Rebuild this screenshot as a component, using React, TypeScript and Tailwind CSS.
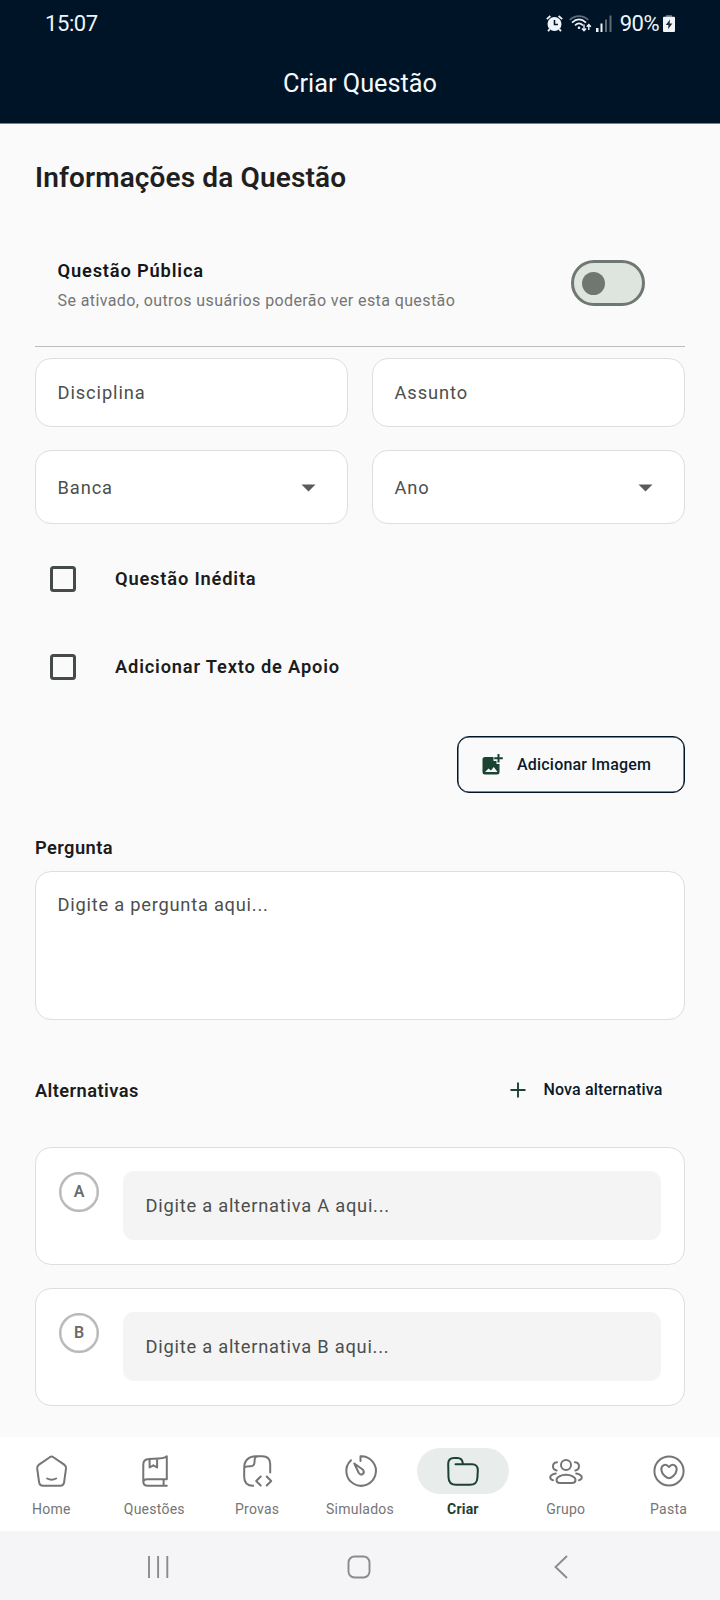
import type { ReactNode } from "react";

function StatusBar() {
  return (
    <div className="flex h-[46px] items-center justify-between pl-[45px] pr-[45px] pt-px text-[22px] leading-[26px] text-[#eef4fa]">
      <span className="tracking-[-0.4px]">15:07</span>
      <div className="flex items-center">
        <svg width="17" height="17" viewBox="0 0 16 16.5" fill="#eef4fa">
          <circle cx="8" cy="8.700" r="6.800" />
          <path d="M0.500 4 4 1M15.500 4 12 1M3.300 13.500l-1.500 2.300M12.700 13.500l1.500 2.300" stroke="#eef4fa" strokeWidth="1.800" />
          <path d="M8 4.800v4.500h3.300" fill="none" stroke="#001427" strokeWidth="1.500" />
        </svg>
        <svg className="ml-[6px]" width="23" height="17" viewBox="0 0 23 17" fill="none" strokeWidth="1.700">
          <path d="M0.700 5C6-.200 14-.200 19.300 5" stroke="#5d6b79" />
          <path d="M3 7.600C7.500 3.500 12.500 3.500 17 7.600M6 10.300C8.500 8 11.500 8 14 10.300" stroke="#eef4fa" />
          <circle cx="10" cy="12.800" r="1.300" fill="#eef4fa" />
          <path d="M15 9.500v6M12.900 13.500l2.100 2.200 2.100-2.200M19.800 15v-5.500M17.700 11.700l2.100-2.200 2.100 2.200" stroke="#eef4fa" strokeWidth="1.400" />
        </svg>
        <svg className="ml-[4px]" width="17" height="17" viewBox="0 0 17 17">
          <rect x="0" y="13" width="2.500" height="4" fill="#eef4fa" />
          <rect x="4.500" y="8.500" width="2" height="8.500" fill="#eef4fa" />
          <rect x="9" y="4.500" width="2" height="12.500" fill="#5d6b79" />
          <rect x="13.500" y="0.500" width="2" height="16.500" fill="#5d6b79" />
        </svg>
        <span className="ml-[7px] tracking-[-0.5px]">90%</span>
        <svg className="ml-[4px]" width="12" height="17" viewBox="0 0 12 17">
          <rect x="3" y="0" width="6" height="3" fill="#5d6b79" />
          <rect x="0" y="1.700" width="12" height="15.300" rx="1" fill="#eef4fa" />
          <path d="M7 4.500 2.800 10h2.700L5 14.200 9.400 8.500H6.600z" fill="#20262c" />
        </svg>
      </div>
    </div>
  );
}

function Field({ label, select = false }: { label: string; select?: boolean }) {
  return (
    <div
      className={
        "flex flex-1 items-center justify-between rounded-[16px] border border-[#dedede] bg-white pl-[21.5px] pr-[31.5px] text-[18.3px] tracking-[0.9px] text-[#4b4f4d] " +
        (select ? "h-[74px] pt-px" : "h-[69px]")
      }
    >
      <span>{label}</span>
      {select && (
        <svg width="15" height="8" viewBox="0 0 15 8" fill="#5b5b5b">
          <path d="M0.500 0.500h14L7.500 7.500z" />
        </svg>
      )}
    </div>
  );
}

function CheckRow({ label }: { label: string }) {
  return (
    <label className="flex h-[88px] items-center pl-[15px]">
      <span className="size-[26px] rounded-[3.5px] border-[3px] border-[#454b48]" />
      <span className="ml-[39px] text-[18.3px] font-semibold tracking-[0.82px] text-[#1c1c1c]">{label}</span>
    </label>
  );
}

function Alternative({ letter }: { letter: string }) {
  return (
    <div className="flex h-[118px] items-start rounded-[16px] border border-[#dedede] bg-white px-[23px] pt-[23px]">
      <div className="mt-px flex size-[40px] items-center justify-center rounded-full border-2 border-[#b8b8b8] text-[16px] font-semibold text-[#6b6b6b] shadow-[inset_0_0_0_0.5px_#b8b8b8]">
        {letter}
      </div>
      <div className="ml-[24px] flex h-[69px] flex-1 items-center rounded-[11px] bg-[#f4f4f4] pl-[22.5px] text-[18.3px] tracking-[0.76px] text-[#4b4f4d]">
        Digite a alternativa {letter} aqui...
      </div>
    </div>
  );
}

const icons: Record<string, ReactNode> = {
  Home: (
    <g transform="translate(0.600 0)">
      <path d="M14.200 2.200 3.400 9.600Q1.300 11.100 1.600 13.700L3.500 27.400Q4 30.800 7.500 30.800H24.500Q28 30.800 28.500 27.400L30.400 13.700Q30.700 11.100 28.600 9.600L17.800 2.200Q16 1 14.200 2.200Z" />
      <path d="M11.500 23.500Q16 26 20.500 23.500" />
    </g>
  ),
  Questões: (
    <g transform="translate(3.300 0)">
      <path d="M25.500 24.300V1.200C22 4.300 14 3.500 7.500 4Q2 4.300 2 9.500V26.500Q2 30.800 6.500 30.800H25.500M25.500 24.300H6Q2 24.300 2 27.500M22.300 24.300V30.800M8.300 4V12.500L12 10.300 15.800 12.500V4" />
    </g>
  ),
  Provas: (
    <g transform="translate(1.200 0)">
      <path d="M28 17.500V9Q28 1.200 20 1.200H14Q2 1.500 2 13V22Q2 30.800 11 30.800M2 13.500C2 11.500 4 11.300 8 11.300Q12 11.300 12.300 7.500C12.500 4 12 2 15.500 1.200" />
      <path d="M18.500 21.500 14 26 18.500 30.500M24.500 21.500 29 26 24.500 30.500" />
    </g>
  ),
  Simulados: (
    <g transform="translate(0.500 0)">
      <path d="M6.500 5.200A14.800 14.800 0 1 0 16 1.200V6" />
      <path d="M9.800 8.500 18.500 14.800C21 18.500 16.500 21.500 14.200 17.800Z" />
    </g>
  ),
  Criar: (
    <path d="M8.500 9.300H25Q31 9.300 30.800 15.500L30.400 23Q29.900 29.800 23 29.800H9Q1.800 29.800 1.500 22.500L1.200 9Q1.200 3 7 3H10.500Q15.200 3 15.800 8.200" />
  ),
  Grupo: (
    <>
      <circle cx="16" cy="10" r="5" />
      <path d="M16 19.800C21 19.800 25.500 22 25.500 25 25.500 27.200 24 28 22 28H10C8 28 6.500 27.200 6.500 25 6.500 22 11 19.800 16 19.800Z" />
      <path d="M7 7.300Q3 7.800 3 11.300 3 14.800 6.700 15.500M25 7.300Q29 7.800 29 11.300 29 14.800 25.300 15.500M5.800 18.400Q0.200 19.600 0.200 22.300 0.200 24.500 3 25.200M26.200 18.400Q31.800 19.600 31.800 22.300 31.800 24.500 29 25.200" />
    </>
  ),
  Pasta: (
    <>
      <circle cx="16" cy="16" r="14.600" />
      <path d="M16 12Q13.500 9 10.800 10.200C6.500 12.300 8.500 18 11.500 20.800Q16 25.500 20.500 20.800C23.500 18 25.500 12.300 21.200 10.200Q18.500 9 16 12Z" />
    </>
  ),
};

function NavItem({ label, active = false }: { label: string; active?: boolean }) {
  return (
    <div className={"flex flex-1 flex-col items-center " + (active ? "text-[#1b4034]" : "text-[#757575]")}>
      <div className={"flex h-[46px] w-[92px] items-center justify-center rounded-full " + (active ? "bg-[#e8eceb]" : "")}>
        <svg
          className="overflow-visible"
          width="32"
          height="32"
          viewBox="0 0 32 32"
          fill="none"
          stroke="currentColor"
          strokeWidth="2"
          strokeLinecap="round"
          strokeLinejoin="round"
        >
          {icons[label]}
        </svg>
      </div>
      <span className={"mt-[5px] text-[14px] leading-[20px] " + (active ? "font-bold tracking-[0.2px]" : "tracking-[0.25px]")}>
        {label}
      </span>
    </div>
  );
}

export default function App() {
  return (
    <div className="flex h-[1600px] w-[720px] flex-col overflow-hidden bg-[#fafafa] font-[Roboto,sans-serif]">
      <header className="h-[124px] border-b border-[#77808a] bg-[#001427]">
        <StatusBar />
        <h1 className="pt-[21px] text-center text-[25.3px] leading-[34px] text-[#f5fafd]">Criar Questão</h1>
      </header>

      <main className="flex flex-1 flex-col px-[35px]">
        <h2 className="mt-[36px] text-[28px] leading-[36px] font-semibold tracking-[0.13px] text-[#1f1f1f]">
          Informações da Questão
        </h2>

        <section className="mt-[61px] flex h-[89px] items-start justify-between pl-[22.5px] pr-[40px]">
          <div>
            <p className="text-[18.3px] leading-[28px] font-semibold tracking-[0.83px] text-[#161616]">Questão Pública</p>
            <p className="mt-[4px] text-[16px] leading-[24px] tracking-[0.4px] text-[#757575]">
              Se ativado, outros usuários poderão ver esta questão
            </p>
          </div>
          <div className="mt-[3px] flex h-[46px] w-[74.5px] items-center rounded-full border-[3px] border-[#6f7772] bg-[#dee5de] pl-[8.5px]">
            <span className="size-[23px] rounded-full bg-[#6f7772]" />
          </div>
        </section>
        <div className="h-px shrink-0 bg-[#bdbdbd]" />

        <div className="mt-[11px] flex gap-[24px]">
          <Field label="Disciplina" />
          <Field label="Assunto" />
        </div>
        <div className="mt-[23px] flex gap-[24px]">
          <Field label="Banca" select />
          <Field label="Ano" select />
        </div>

        <div className="mt-[11px]">
          <CheckRow label="Questão Inédita" />
          <CheckRow label="Adicionar Texto de Apoio" />
        </div>

        <button className="mt-[25px] flex h-[57px] w-[228px] items-center self-end rounded-[12px] border border-[#001427] pl-[23px] text-[#0a1a2c] shadow-[inset_0_0_0_0.5px_#001427]">
          <svg width="23" height="23" viewBox="0 0 23 23" fill="#1b4332">
            <path d="M4 4H12.500V8H15.500V11H18.500V19Q18.500 21.500 16 21.500H4Q1.500 21.500 1.500 19V6.500Q1.500 4 4 4ZM4 19H16.500L12.800 14 10 17.500 7.500 15.500Z" fillRule="evenodd" />
            <path d="M17.500 1v8.500M13.200 5.200h8.600" stroke="#1b4332" strokeWidth="2" />
          </svg>
          <span className="ml-[13px] text-[16px] font-medium tracking-[0.2px]">Adicionar Imagem</span>
        </button>

        <h3 className="mt-[41px] text-[18.3px] leading-[28px] font-semibold tracking-[0.42px] text-[#1c1c1c]">Pergunta</h3>
        <div className="mt-[9px] h-[149px] shrink-0 rounded-[16px] border border-[#dedede] bg-white pl-[21.5px] pt-[19px] text-[18.3px] leading-[28px] tracking-[0.76px] text-[#4b4f4d]">
          Digite a pergunta aqui...
        </div>

        <div className="mt-[46px] flex h-[48px] items-center justify-between pr-[22.5px]">
          <h3 className="pt-px text-[18.3px] font-semibold tracking-[0.42px] text-[#1c1c1c]">Alternativas</h3>
          <div className="flex items-center text-[#0a1a2c]">
            <svg width="16" height="16" viewBox="0 0 16 16" stroke="#1b4332" strokeWidth="1.900">
              <path d="M8 0.500v15M0.500 8h15" />
            </svg>
            <span className="ml-[17px] text-[16px] font-medium tracking-[0.17px]">Nova alternativa</span>
          </div>
        </div>

        <div className="mt-[33px] flex flex-col gap-[23px]">
          <Alternative letter="A" />
          <Alternative letter="B" />
        </div>
      </main>

      <nav className="flex h-[94px] shrink-0 bg-white pt-[11px]">
        <NavItem label="Home" />
        <NavItem label="Questões" />
        <NavItem label="Provas" />
        <NavItem label="Simulados" />
        <NavItem label="Criar" active />
        <NavItem label="Grupo" />
        <NavItem label="Pasta" />
      </nav>
      <footer className="flex h-[69px] shrink-0 items-center justify-center bg-[#f5f5f7] pt-[2px]">
        <svg width="424" height="24" viewBox="0 0 424 24" fill="none" stroke="#8b8b8d" strokeWidth="1.900">
          <path d="M1 1v22M10.100 1v22M19.300 1v22M419 1 407.500 12 419 23" />
          <rect x="200.500" y="1.500" width="21" height="21" rx="6" />
        </svg>
      </footer>
    </div>
  );
}
